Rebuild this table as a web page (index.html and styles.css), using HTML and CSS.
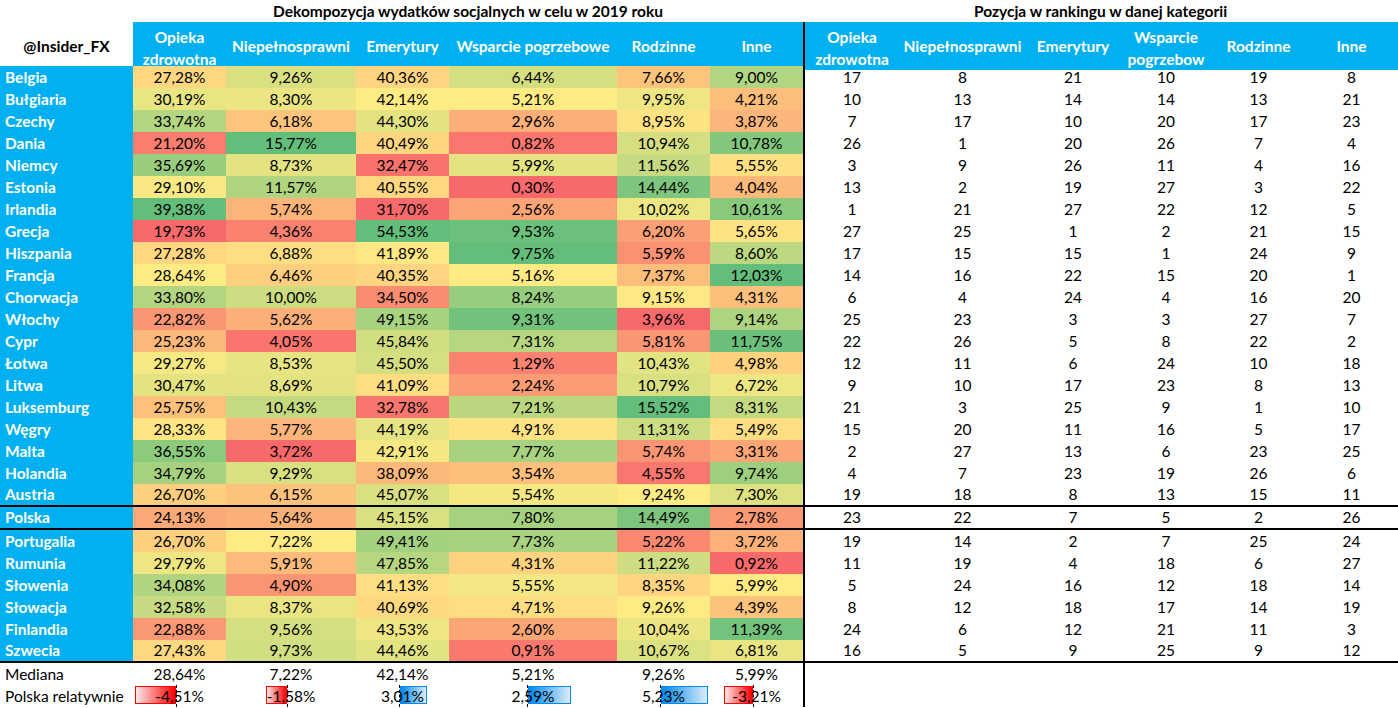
FILE: index.html
```html
<!DOCTYPE html>
<html lang="pl">
<head>
<meta charset="utf-8">
<title>Dekompozycja wydatków socjalnych</title>
<link rel="stylesheet" href="styles.css">
</head>
<body>
<div class="sheet">
  <div class="row title-row">
    <div class="cell"></div>
    <div class="cell t1">Dekompozycja wydatków socjalnych w celu w 2019 roku</div>
    <div class="cell t2">Pozycja w rankingu w danej kategorii</div>
  </div>
  <div class="row head">
    <div class="cell corner">@Insider_FX</div>
    <div class="cell wrap">Opieka zdrowotna</div>
    <div class="cell">Niepełnosprawni</div>
    <div class="cell">Emerytury</div>
    <div class="cell">Wsparcie pogrzebowe</div>
    <div class="cell">Rodzinne</div>
    <div class="cell">Inne</div>
    <div class="cell wrap split">Opieka zdrowotna</div>
    <div class="cell">Niepełnosprawni</div>
    <div class="cell">Emerytury</div>
    <div class="cell wrap">Wsparcie pogrzebow</div>
    <div class="cell">Rodzinne</div>
    <div class="cell">Inne</div>
  </div>

  <div class="row data"><div class="cell name">Belgia</div><div class="cell v">27,28%</div><div class="cell v">9,26%</div><div class="cell v">40,36%</div><div class="cell v">6,44%</div><div class="cell v">7,66%</div><div class="cell v">9,00%</div><div class="cell split">17</div><div class="cell">8</div><div class="cell">21</div><div class="cell">10</div><div class="cell">19</div><div class="cell">8</div></div>
  <div class="row data"><div class="cell name">Bułgiaria</div><div class="cell v">30,19%</div><div class="cell v">8,30%</div><div class="cell v">42,14%</div><div class="cell v">5,21%</div><div class="cell v">9,95%</div><div class="cell v">4,21%</div><div class="cell split">10</div><div class="cell">13</div><div class="cell">14</div><div class="cell">14</div><div class="cell">13</div><div class="cell">21</div></div>
  <div class="row data"><div class="cell name">Czechy</div><div class="cell v">33,74%</div><div class="cell v">6,18%</div><div class="cell v">44,30%</div><div class="cell v">2,96%</div><div class="cell v">8,95%</div><div class="cell v">3,87%</div><div class="cell split">7</div><div class="cell">17</div><div class="cell">10</div><div class="cell">20</div><div class="cell">17</div><div class="cell">23</div></div>
  <div class="row data"><div class="cell name">Dania</div><div class="cell v">21,20%</div><div class="cell v">15,77%</div><div class="cell v">40,49%</div><div class="cell v">0,82%</div><div class="cell v">10,94%</div><div class="cell v">10,78%</div><div class="cell split">26</div><div class="cell">1</div><div class="cell">20</div><div class="cell">26</div><div class="cell">7</div><div class="cell">4</div></div>
  <div class="row data"><div class="cell name">Niemcy</div><div class="cell v">35,69%</div><div class="cell v">8,73%</div><div class="cell v">32,47%</div><div class="cell v">5,99%</div><div class="cell v">11,56%</div><div class="cell v">5,55%</div><div class="cell split">3</div><div class="cell">9</div><div class="cell">26</div><div class="cell">11</div><div class="cell">4</div><div class="cell">16</div></div>
  <div class="row data"><div class="cell name">Estonia</div><div class="cell v">29,10%</div><div class="cell v">11,57%</div><div class="cell v">40,55%</div><div class="cell v">0,30%</div><div class="cell v">14,44%</div><div class="cell v">4,04%</div><div class="cell split">13</div><div class="cell">2</div><div class="cell">19</div><div class="cell">27</div><div class="cell">3</div><div class="cell">22</div></div>
  <div class="row data"><div class="cell name">Irlandia</div><div class="cell v">39,38%</div><div class="cell v">5,74%</div><div class="cell v">31,70%</div><div class="cell v">2,56%</div><div class="cell v">10,02%</div><div class="cell v">10,61%</div><div class="cell split">1</div><div class="cell">21</div><div class="cell">27</div><div class="cell">22</div><div class="cell">12</div><div class="cell">5</div></div>
  <div class="row data"><div class="cell name">Grecja</div><div class="cell v">19,73%</div><div class="cell v">4,36%</div><div class="cell v">54,53%</div><div class="cell v">9,53%</div><div class="cell v">6,20%</div><div class="cell v">5,65%</div><div class="cell split">27</div><div class="cell">25</div><div class="cell">1</div><div class="cell">2</div><div class="cell">21</div><div class="cell">15</div></div>
  <div class="row data"><div class="cell name">Hiszpania</div><div class="cell v">27,28%</div><div class="cell v">6,88%</div><div class="cell v">41,89%</div><div class="cell v">9,75%</div><div class="cell v">5,59%</div><div class="cell v">8,60%</div><div class="cell split">17</div><div class="cell">15</div><div class="cell">15</div><div class="cell">1</div><div class="cell">24</div><div class="cell">9</div></div>
  <div class="row data"><div class="cell name">Francja</div><div class="cell v">28,64%</div><div class="cell v">6,46%</div><div class="cell v">40,35%</div><div class="cell v">5,16%</div><div class="cell v">7,37%</div><div class="cell v">12,03%</div><div class="cell split">14</div><div class="cell">16</div><div class="cell">22</div><div class="cell">15</div><div class="cell">20</div><div class="cell">1</div></div>
  <div class="row data"><div class="cell name">Chorwacja</div><div class="cell v">33,80%</div><div class="cell v">10,00%</div><div class="cell v">34,50%</div><div class="cell v">8,24%</div><div class="cell v">9,15%</div><div class="cell v">4,31%</div><div class="cell split">6</div><div class="cell">4</div><div class="cell">24</div><div class="cell">4</div><div class="cell">16</div><div class="cell">20</div></div>
  <div class="row data"><div class="cell name">Włochy</div><div class="cell v">22,82%</div><div class="cell v">5,62%</div><div class="cell v">49,15%</div><div class="cell v">9,31%</div><div class="cell v">3,96%</div><div class="cell v">9,14%</div><div class="cell split">25</div><div class="cell">23</div><div class="cell">3</div><div class="cell">3</div><div class="cell">27</div><div class="cell">7</div></div>
  <div class="row data"><div class="cell name">Cypr</div><div class="cell v">25,23%</div><div class="cell v">4,05%</div><div class="cell v">45,84%</div><div class="cell v">7,31%</div><div class="cell v">5,81%</div><div class="cell v">11,75%</div><div class="cell split">22</div><div class="cell">26</div><div class="cell">5</div><div class="cell">8</div><div class="cell">22</div><div class="cell">2</div></div>
  <div class="row data"><div class="cell name">Łotwa</div><div class="cell v">29,27%</div><div class="cell v">8,53%</div><div class="cell v">45,50%</div><div class="cell v">1,29%</div><div class="cell v">10,43%</div><div class="cell v">4,98%</div><div class="cell split">12</div><div class="cell">11</div><div class="cell">6</div><div class="cell">24</div><div class="cell">10</div><div class="cell">18</div></div>
  <div class="row data"><div class="cell name">Litwa</div><div class="cell v">30,47%</div><div class="cell v">8,69%</div><div class="cell v">41,09%</div><div class="cell v">2,24%</div><div class="cell v">10,79%</div><div class="cell v">6,72%</div><div class="cell split">9</div><div class="cell">10</div><div class="cell">17</div><div class="cell">23</div><div class="cell">8</div><div class="cell">13</div></div>
  <div class="row data"><div class="cell name">Luksemburg</div><div class="cell v">25,75%</div><div class="cell v">10,43%</div><div class="cell v">32,78%</div><div class="cell v">7,21%</div><div class="cell v">15,52%</div><div class="cell v">8,31%</div><div class="cell split">21</div><div class="cell">3</div><div class="cell">25</div><div class="cell">9</div><div class="cell">1</div><div class="cell">10</div></div>
  <div class="row data"><div class="cell name">Węgry</div><div class="cell v">28,33%</div><div class="cell v">5,77%</div><div class="cell v">44,19%</div><div class="cell v">4,91%</div><div class="cell v">11,31%</div><div class="cell v">5,49%</div><div class="cell split">15</div><div class="cell">20</div><div class="cell">11</div><div class="cell">16</div><div class="cell">5</div><div class="cell">17</div></div>
  <div class="row data"><div class="cell name">Malta</div><div class="cell v">36,55%</div><div class="cell v">3,72%</div><div class="cell v">42,91%</div><div class="cell v">7,77%</div><div class="cell v">5,74%</div><div class="cell v">3,31%</div><div class="cell split">2</div><div class="cell">27</div><div class="cell">13</div><div class="cell">6</div><div class="cell">23</div><div class="cell">25</div></div>
  <div class="row data"><div class="cell name">Holandia</div><div class="cell v">34,79%</div><div class="cell v">9,29%</div><div class="cell v">38,09%</div><div class="cell v">3,54%</div><div class="cell v">4,55%</div><div class="cell v">9,74%</div><div class="cell split">4</div><div class="cell">7</div><div class="cell">23</div><div class="cell">19</div><div class="cell">26</div><div class="cell">6</div></div>
  <div class="row data sep"><div class="cell name">Austria</div><div class="cell v">26,70%</div><div class="cell v">6,15%</div><div class="cell v">45,07%</div><div class="cell v">5,54%</div><div class="cell v">9,24%</div><div class="cell v">7,30%</div><div class="cell split">19</div><div class="cell">18</div><div class="cell">8</div><div class="cell">13</div><div class="cell">15</div><div class="cell">11</div></div>
  <div class="row data sep"><div class="cell name">Polska</div><div class="cell v">24,13%</div><div class="cell v">5,64%</div><div class="cell v">45,15%</div><div class="cell v">7,80%</div><div class="cell v">14,49%</div><div class="cell v">2,78%</div><div class="cell split">23</div><div class="cell">22</div><div class="cell">7</div><div class="cell">5</div><div class="cell">2</div><div class="cell">26</div></div>
  <div class="row data"><div class="cell name">Portugalia</div><div class="cell v">26,70%</div><div class="cell v">7,22%</div><div class="cell v">49,41%</div><div class="cell v">7,73%</div><div class="cell v">5,22%</div><div class="cell v">3,72%</div><div class="cell split">19</div><div class="cell">14</div><div class="cell">2</div><div class="cell">7</div><div class="cell">25</div><div class="cell">24</div></div>
  <div class="row data"><div class="cell name">Rumunia</div><div class="cell v">29,79%</div><div class="cell v">5,91%</div><div class="cell v">47,85%</div><div class="cell v">4,31%</div><div class="cell v">11,22%</div><div class="cell v">0,92%</div><div class="cell split">11</div><div class="cell">19</div><div class="cell">4</div><div class="cell">18</div><div class="cell">6</div><div class="cell">27</div></div>
  <div class="row data"><div class="cell name">Słowenia</div><div class="cell v">34,08%</div><div class="cell v">4,90%</div><div class="cell v">41,13%</div><div class="cell v">5,55%</div><div class="cell v">8,35%</div><div class="cell v">5,99%</div><div class="cell split">5</div><div class="cell">24</div><div class="cell">16</div><div class="cell">12</div><div class="cell">18</div><div class="cell">14</div></div>
  <div class="row data"><div class="cell name">Słowacja</div><div class="cell v">32,58%</div><div class="cell v">8,37%</div><div class="cell v">40,69%</div><div class="cell v">4,71%</div><div class="cell v">9,26%</div><div class="cell v">4,39%</div><div class="cell split">8</div><div class="cell">12</div><div class="cell">18</div><div class="cell">17</div><div class="cell">14</div><div class="cell">19</div></div>
  <div class="row data"><div class="cell name">Finlandia</div><div class="cell v">22,88%</div><div class="cell v">9,56%</div><div class="cell v">43,53%</div><div class="cell v">2,60%</div><div class="cell v">10,04%</div><div class="cell v">11,39%</div><div class="cell split">24</div><div class="cell">6</div><div class="cell">12</div><div class="cell">21</div><div class="cell">11</div><div class="cell">3</div></div>
  <div class="row data sep"><div class="cell name">Szwecia</div><div class="cell v">27,43%</div><div class="cell v">9,73%</div><div class="cell v">44,46%</div><div class="cell v">0,91%</div><div class="cell v">10,67%</div><div class="cell v">6,81%</div><div class="cell split">16</div><div class="cell">5</div><div class="cell">9</div><div class="cell">25</div><div class="cell">9</div><div class="cell">12</div></div>

  <div class="row"><div class="cell label">Mediana</div><div class="cell">28,64%</div><div class="cell">7,22%</div><div class="cell">42,14%</div><div class="cell">5,21%</div><div class="cell">9,26%</div><div class="cell">5,99%</div><div class="cell split"></div></div>
  <div class="row">
    <div class="cell label">Polska relatywnie</div>
    <div class="barcell"><div class="track"><div class="neg"><div class="bar n" style="width:100%"></div></div><div class="pos"></div></div><div class="txt">-4,51%</div></div>
    <div class="barcell"><div class="track"><div class="neg"><div class="bar n" style="width:35%"></div></div><div class="pos"></div></div><div class="txt">-1,58%</div></div>
    <div class="barcell"><div class="track"><div class="neg"></div><div class="pos"><div class="bar p" style="width:57.6%"></div></div></div><div class="txt">3,01%</div></div>
    <div class="barcell"><div class="track"><div class="neg"></div><div class="pos"><div class="bar p" style="width:49.5%"></div></div></div><div class="txt">2,59%</div></div>
    <div class="barcell"><div class="track"><div class="neg"></div><div class="pos"><div class="bar p" style="width:100%"></div></div></div><div class="txt">5,23%</div></div>
    <div class="barcell"><div class="track"><div class="neg"><div class="bar n" style="width:71.2%"></div></div><div class="pos"></div></div><div class="txt">-3,21%</div></div>
    <div class="cell split"></div>
  </div>
</div>
<script src="script.js"></script>
</body>
</html>
```

FILE: styles.css
```css
* { box-sizing: border-box; }
html, body { margin: 0; padding: 0; background: #ffffff; }
body {
  font-family: Lato, "Noto Sans", "Liberation Sans", sans-serif;
  font-size: 15.5px;
  color: #000000;
}
.sheet {
  width: 1398px;
  display: flex;
  flex-direction: column;
}
.row {
  display: grid;
  grid-template-columns: 133px 93px 130px 93px 168px 93px 93px 96px 127px 94px 92px 93px 93px;
  height: 22px;
}
.cell {
  display: flex;
  align-items: center;
  justify-content: center;
  line-height: 22px;
  white-space: nowrap;
}
.title-row .cell { font-weight: 700; }
.t1 { grid-column: 2 / span 6; }
.t2 { grid-column: 8 / span 6; }

.head { height: 44px; }
.head .cell {
  background: #00b0f0;
  color: #ffffff;
  font-weight: 700;
  text-align: center;
  white-space: normal;
}
.head .corner { background: #ffffff; color: #000000; }
.head .wrap { padding-top: 4px; }

.split { border-left: 2px solid #000000; }

.name {
  background: #00b0f0;
  color: #ffffff;
  font-weight: 700;
  justify-content: flex-start;
  padding-left: 5px;
}
.label {
  justify-content: flex-start;
  padding-left: 5px;
}
.row.sep {
  height: 23px;
  border-bottom: 2px solid #000000;
}
.row.sep .cell { line-height: 21px; }

.barcell { display: grid; }
.barcell > * { grid-area: 1 / 1; }
.track {
  display: flex;
  padding: 0 2px;
}
.neg {
  width: 46.6%;
  display: flex;
  justify-content: flex-end;
}
.pos {
  flex: 1;
  display: flex;
  border-left: 1px dashed #000000;
}
.bar { margin: 1px 0 3px; }
.bar.n {
  background: linear-gradient(to right, #ffe8e8 0%, #ff0000 100%);
  border: 1px solid #ff0000;
}
.bar.p {
  background: linear-gradient(to right, #008aef 0%, #dcecfb 100%);
  border: 1px solid #008aef;
}
.txt {
  display: flex;
  align-items: center;
  justify-content: center;
  line-height: 22px;
  white-space: nowrap;
}
```

FILE: script.js
```js
(function () {
  var rows = document.querySelectorAll('.row.data');
  var cols = [[], [], [], [], [], []];
  rows.forEach(function (r) {
    r.querySelectorAll('.v').forEach(function (c, i) {
      var n = parseFloat(c.textContent.replace(',', '.'));
      cols[i].push({ el: c, n: n });
    });
  });
  var R = [248, 105, 107], Y = [255, 235, 132], G = [99, 190, 123];
  function mix(a, b, t) {
    return a.map(function (x, k) { return Math.round(x + (b[k] - x) * t); });
  }
  cols.forEach(function (list) {
    var s = list.map(function (o) { return o.n; }).sort(function (a, b) { return a - b; });
    var min = s[0], max = s[s.length - 1];
    var m = (s.length - 1) / 2;
    var mid = (s[Math.floor(m)] + s[Math.ceil(m)]) / 2;
    list.forEach(function (o) {
      var c = o.n <= mid
        ? mix(R, Y, mid === min ? 1 : (o.n - min) / (mid - min))
        : mix(Y, G, (o.n - mid) / (max - mid));
      o.el.style.backgroundColor = 'rgb(' + c.join(',') + ')';
    });
  });
})();
```
